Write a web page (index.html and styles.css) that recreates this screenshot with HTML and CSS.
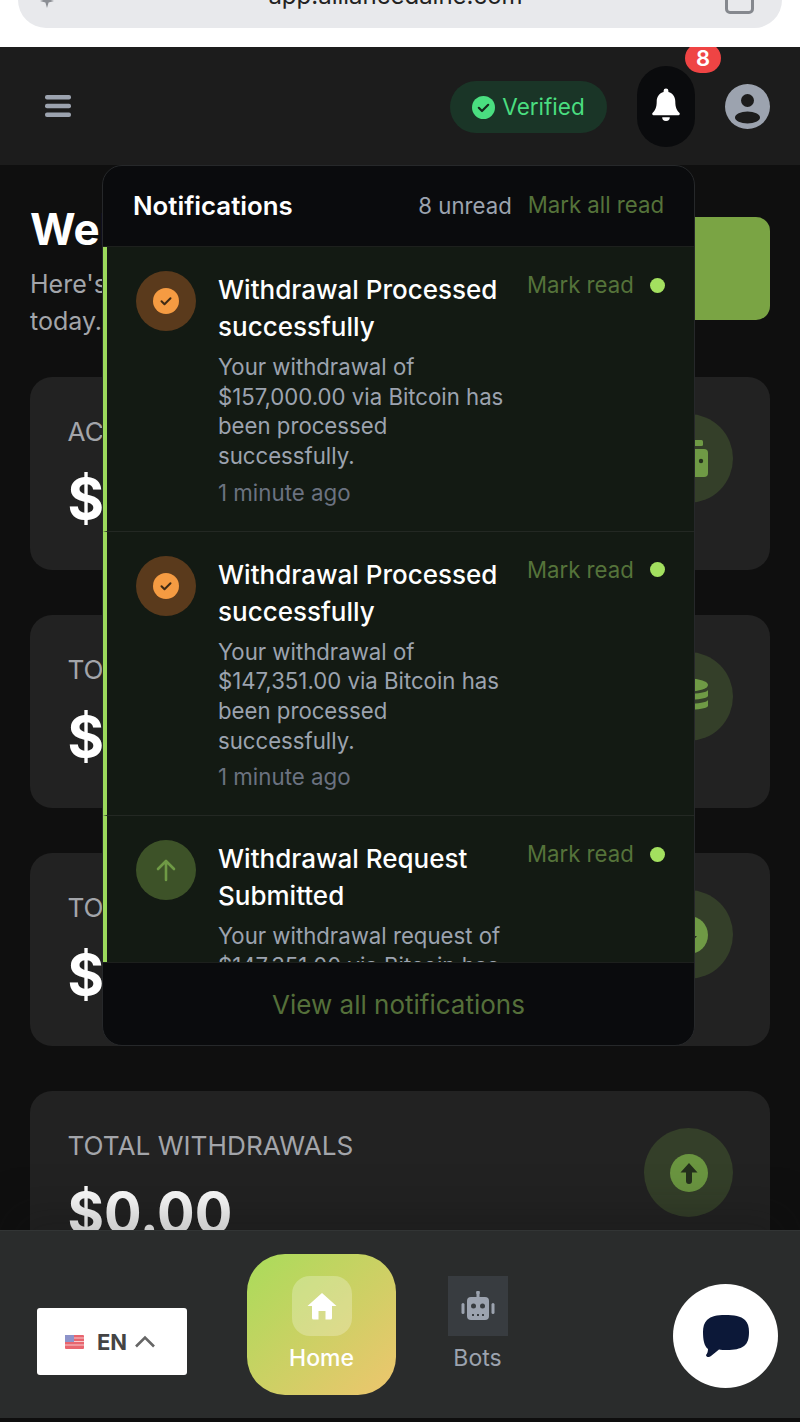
FILE: index.html
```html
<!DOCTYPE html>
<html lang="en">
<head>
<meta charset="utf-8">
<title>Dashboard</title>
<link rel="stylesheet" href="styles.css">
</head>
<body>
<div class="page">
  <div class="browser">
    <div class="urlbar">
      <svg class="spark" width="28" height="28" viewBox="0 0 28 28"><path d="M9 8l1.600 5.400L16 15l-5.400 1.600L9 22l-1.600-5.400L2 15l5.400-1.600zM20 1l1 5 1 1-2 6-1-5-1-1z" fill="#8b8e94"/></svg>
      <span class="url">app.alliancedaine.com</span>
      <span class="tabs"></span>
    </div>
  </div>

  <header class="topbar">
    <svg class="menu" width="26" height="22" viewBox="0 0 26 22"><rect y="0" width="26" height="4.500" rx="2" fill="#9ca3af"/><rect y="8.750" width="26" height="4.500" rx="2" fill="#9ca3af"/><rect y="17.500" width="26" height="4.500" rx="2" fill="#9ca3af"/></svg>
    <div class="top-actions">
      <div class="verified">
        <svg width="23" height="23" viewBox="0 0 23 23"><circle cx="11.500" cy="11.500" r="11.500" fill="#4ade80"/><path d="M6.800 11.800l3.200 3.200 6.200-6.200" fill="none" stroke="#14291c" stroke-width="2.200" stroke-linecap="round" stroke-linejoin="round"/></svg>
        <span class="verified-text">Verified</span>
      </div>
      <div class="bell">
        <svg width="34" height="38" viewBox="0 0 24 27"><path d="M12 1a1.700 1.700 0 0 0-1.700 1.700v.8C7.200 4.300 5.400 7 5.400 10.300c0 4.200-1.100 6.200-3 8.200-.5.600-.1 1.500.7 1.500h17.800c.8 0 1.200-.9.700-1.500-1.900-2-3-4-3-8.200 0-3.300-1.800-6-4.900-6.800v-.8A1.700 1.700 0 0 0 12 1z" fill="#fff"/><path d="M9.300 21.500a2.700 2.700 0 0 0 5.400 0z" fill="#fff"/></svg>
        <span class="badge">8</span>
      </div>
      <svg class="avatar" width="45" height="45" viewBox="0 0 45 45"><circle cx="22.500" cy="22.500" r="22.500" fill="#9ca3af"/><circle cx="22.500" cy="16.500" r="6.500" fill="#1c1c1c"/><ellipse cx="22.500" cy="33.500" rx="12.500" ry="6" fill="#1c1c1c"/></svg>
    </div>
  </header>

  <main class="content">
    <section class="hero">
      <div class="hero-text">
        <h1>Welcome back</h1>
        <p>Here's your account overview for today.</p>
      </div>
      <div class="hero-btn"></div>
    </section>

    <section class="card">
      <div>
        <div class="card-label">ACCOUNT BALANCE</div>
        <div class="card-value">$0.00</div>
      </div>
      <div class="card-icon">
        <svg width="38" height="38" viewBox="0 0 38 38"><rect x="5" y="0" width="28" height="6" rx="1.500" fill="#6f9a45"/><path d="M4 9h30a4 4 0 0 1 4 4v20a4 4 0 0 1-4 4H4a4 4 0 0 1-4-4V13a4 4 0 0 1 4-4z" fill="#6f9a45"/><circle cx="31" cy="21" r="2.200" fill="#24301c"/></svg>
      </div>
    </section>

    <section class="card">
      <div>
        <div class="card-label">TOTAL DEPOSITS</div>
        <div class="card-value">$0.00</div>
      </div>
      <div class="card-icon">
        <svg width="38" height="38" viewBox="0 0 38 38"><ellipse cx="19" cy="7" rx="19" ry="6.500" fill="#6f9a45"/><path d="M0 12c3 5 35 5 38 0v6c-3 5-35 5-38 0z" fill="#6f9a45"/><path d="M0 22c3 5 35 5 38 0v6c-3 5-35 5-38 0z" fill="#6f9a45"/><path d="M14 30h5v8h-5z" fill="#6f9a45"/></svg>
      </div>
    </section>

    <section class="card">
      <div>
        <div class="card-label">TOTAL PROFITS</div>
        <div class="card-value">$0.00</div>
      </div>
      <div class="card-icon">
        <svg width="38" height="38" viewBox="0 0 38 38"><circle cx="19" cy="19" r="19" fill="#6f9a45"/><path d="M19 29l8-9h-5v-9a3 3 0 0 0-6 0v9h-5z" fill="#24301c"/></svg>
      </div>
    </section>

    <section class="card">
      <div>
        <div class="card-label">TOTAL WITHDRAWALS</div>
        <div class="card-value">$0.00</div>
      </div>
      <div class="card-icon">
        <svg width="38" height="38" viewBox="0 0 38 38"><circle cx="19" cy="19" r="19" fill="#6a9540"/><path d="M19 9l-8.500 9.500H16V27a3 3 0 0 0 6 0v-8.500h5.500z" fill="#24301c"/></svg>
      </div>
    </section>
  </main>

  <aside class="panel">
    <div class="panel-head">
      <span class="panel-title">Notifications</span>
      <div class="panel-meta">
        <span class="unread">8 unread</span>
        <span class="mark">Mark all read</span>
      </div>
    </div>
    <div class="panel-list">
      <article class="note">
        <div class="note-icon note-icon-orange">
          <svg width="26" height="26" viewBox="0 0 26 26"><circle cx="13" cy="13" r="13" fill="#f59b42"/><path d="M8.500 13.300l3 3 6-6" fill="none" stroke="#3f2a14" stroke-width="2" stroke-linecap="round" stroke-linejoin="round"/></svg>
        </div>
        <div class="note-body">
          <h2>Withdrawal Processed successfully</h2>
          <p>Your withdrawal of $157,000.00 via Bitcoin has been processed successfully.</p>
          <time>1 minute ago</time>
        </div>
        <div class="note-side"><span class="mark">Mark read</span><span class="dot"></span></div>
      </article>
      <article class="note">
        <div class="note-icon note-icon-orange">
          <svg width="26" height="26" viewBox="0 0 26 26"><circle cx="13" cy="13" r="13" fill="#f59b42"/><path d="M8.500 13.300l3 3 6-6" fill="none" stroke="#3f2a14" stroke-width="2" stroke-linecap="round" stroke-linejoin="round"/></svg>
        </div>
        <div class="note-body">
          <h2>Withdrawal Processed successfully</h2>
          <p>Your withdrawal of $147,351.00 via Bitcoin has been processed successfully.</p>
          <time>1 minute ago</time>
        </div>
        <div class="note-side"><span class="mark">Mark read</span><span class="dot"></span></div>
      </article>
      <article class="note">
        <div class="note-icon note-icon-green">
          <svg width="24" height="26" viewBox="0 0 24 26"><path d="M12 23V4M4 12l8-8 8 8" fill="none" stroke="#6f9a45" stroke-width="2.600" stroke-linecap="round" stroke-linejoin="round"/></svg>
        </div>
        <div class="note-body">
          <h2>Withdrawal Request Submitted</h2>
          <p>Your withdrawal request of $147,351.00 via Bitcoin has been submitted.</p>
          <time>1 minute ago</time>
        </div>
        <div class="note-side"><span class="mark">Mark read</span><span class="dot"></span></div>
      </article>
    </div>
    <div class="panel-foot">View all notifications</div>
  </aside>

  <nav class="bottombar">
    <div class="nav-item nav-home">
      <span class="nav-icon">
        <svg width="30" height="28" viewBox="0 0 30 28"><path d="M15 1L0.500 14h4.500v12a1.500 1.500 0 0 0 1.500 1.500h5V19h7v8.500h5a1.500 1.500 0 0 0 1.500-1.500V14h4.500z" fill="#fff"/></svg>
      </span>
      <span class="nav-label">Home</span>
    </div>
    <div class="nav-item nav-bots">
      <span class="nav-icon">
        <svg width="34" height="30" viewBox="0 0 34 30"><rect x="6" y="6" width="22" height="23" rx="4" fill="#9ca3af"/><rect x="15.500" y="0" width="3" height="7" fill="#9ca3af"/><circle cx="17" cy="1.800" r="1.800" fill="#9ca3af"/><rect x="0.500" y="12" width="3" height="11" rx="1.500" fill="#9ca3af"/><rect x="30.500" y="12" width="3" height="11" rx="1.500" fill="#9ca3af"/><circle cx="12.500" cy="15" r="2.500" fill="#383c40"/><circle cx="21.500" cy="15" r="2.500" fill="#383c40"/><path d="M11 23h2v2h-2zM16 23h2v2h-2zM21 23h2v2h-2z" fill="#383c40"/></svg>
      </span>
      <span class="nav-label">Bots</span>
    </div>
    <div class="lang">
      <svg class="flag" width="19" height="14" viewBox="0 0 19 14"><rect width="19" height="14" rx="1" fill="#e8656e"/><path d="M0 3h19M0 6.500h19M0 10h19" stroke="#f6c9cc" stroke-width="1.200"/><rect width="9" height="7" fill="#8d93c9"/></svg>
      <span class="lang-code">EN</span>
      <svg width="22" height="13" viewBox="0 0 22 13"><path d="M2 11.500L11 2.500l9 9" fill="none" stroke="#666" stroke-width="2.600"/></svg>
    </div>
    <div class="chat">
      <svg width="46" height="44" viewBox="0 0 46 44"><path d="M22 1c9 0 16 1 20 5 3 3 4 7 4 12 0 6-1 11-5 14-4 3-10 4-17 4-3 0-6 0-8-.5L8 42c-2 2-5 1-5-1 1-1 2-3 2-6C1 32 0 25 0 18c0-5 1-9 4-12 4-4 10-5 18-5z" fill="#0c1838"/></svg>
    </div>
  </nav>
</div>
</body>
</html>
```
FILE: styles.css
```css
* { box-sizing: border-box; margin: 0; padding: 0; }
html, body { background: #0f0f0f; }
body { font-family: Inter, "Liberation Sans", sans-serif; }

.page {
  position: relative;
  width: 800px;
  height: 1422px;
  overflow: hidden;
  background: #0f0f0f;
}

/* browser chrome */
.browser { height: 47px; background: #fff; padding: 0 18px; }
.urlbar {
  height: 28px;
  background: #e8e9ec;
  border-radius: 0 0 28px 28px;
  padding: 0 28px 0 20px;
  display: flex;
  align-items: flex-end;
  justify-content: space-between;
  overflow: hidden;
}
.spark { margin-bottom: 14px; }
.url { font-size: 24px; line-height: 28px; margin-bottom: 18px; color: #222; }
.tabs {
  width: 29px;
  height: 30px;
  margin-bottom: 14px;
  border: 3px solid #85888e;
  border-radius: 5px;
}

/* top bar */
.topbar {
  height: 118px;
  background: #1c1c1c;
  padding: 0 30px 0 45px;
  display: flex;
  align-items: center;
  justify-content: space-between;
  overflow: hidden;
}
.top-actions { display: flex; align-items: center; gap: 30px; }
.verified {
  height: 52px;
  width: 157px;
  margin-top: 2px;
  border-radius: 26px;
  background: #1a3527;
  color: #4ade80;
  font-size: 22.500px;
  display: flex;
  align-items: center;
  justify-content: center;
  gap: 7px;
}
.verified-text { margin-bottom: 2px; }
.bell {
  position: relative;
  width: 58px;
  height: 81px;
  border-radius: 29px;
  background: #0a0b0d;
  display: flex;
  align-items: center;
  justify-content: center;
}
.badge {
  position: absolute;
  top: -23px;
  left: 48px;
  width: 36px;
  height: 30px;
  border-radius: 15px;
  background: #ef4444;
  color: #fff;
  font-size: 22px;
  font-weight: 600;
  display: flex;
  align-items: center;
  justify-content: center;
}

/* main */
.content { padding: 40px 30px 0; display: flex; flex-direction: column; gap: 45px; }
.hero {
  display: flex;
  align-items: flex-start;
  justify-content: space-between;
  height: 135px;
  margin-bottom: -8px;
}
.hero-text { width: 420px; }
.hero-text h1 { font-size: 44px; line-height: 48px; font-weight: 700; color: #fff; margin-bottom: 13px; }
.hero-text p { font-size: 25px; line-height: 37px; color: #a3a5aa; }
.hero-btn { width: 200px; height: 103px; margin-top: 12px; border-radius: 14px; background: #7aa444; }

.card {
  height: 193px;
  flex: none;
  border-radius: 22px;
  background: #222;
  padding: 38px 37px 0 37.500px;
  display: flex;
  justify-content: space-between;
  align-items: flex-start;
}
.card-label { font-size: 26.200px; line-height: 34px; color: #a3a5aa; }
.card-value { font-size: 55.800px; line-height: 64px; font-weight: 700; color: #fff; margin-top: 18px; }
.card-icon {
  width: 89px;
  height: 89px;
  margin-top: -1px;
  border-radius: 50%;
  background: #343f29;
  display: flex;
  align-items: center;
  justify-content: center;
}

/* notifications dropdown */
.panel {
  position: absolute;
  left: 102px;
  top: 165px;
  width: 593px;
  height: 881px;
  border: 1px solid #26282a;
  border-radius: 20px;
  background: #0a0b0d;
  display: flex;
  flex-direction: column;
  overflow: hidden;
}
.panel-head {
  height: 81px;
  flex: none;
  padding: 0 30px 2px;
  display: flex;
  align-items: center;
  justify-content: space-between;
  border-bottom: 1px solid #1d201d;
}
.panel-title { font-size: 25.800px; font-weight: 600; color: #fff; }
.panel-meta { display: flex; gap: 16px; font-size: 22.200px; align-items: center; }
.unread { color: #9ca3af; }
.mark { color: #55733a; font-size: 22.200px; line-height: 28px; }
.panel-list { flex: 1; overflow: hidden; }
.note {
  height: 284.500px;
  background: #131a13;
  border-left: 4px solid #9bd95b;
  border-bottom: 1px solid #232823;
  padding: 24px 30px 0 29px;
  display: flex;
}
.note-icon {
  width: 60px;
  height: 60px;
  flex: none;
  border-radius: 50%;
  display: flex;
  align-items: center;
  justify-content: center;
  margin-right: 22px;
}
.note-icon-orange { background: #5a3a1c; }
.note-icon-green { background: #3d5228; }
.note-body { width: 292px; flex: none; margin-right: 17px; }
.note-body h2 { font-size: 26px; line-height: 37px; font-weight: 500; color: #fff; margin-bottom: 7px; }
.note-body p { font-size: 22.200px; line-height: 29.700px; color: #9ca3af; }
.note-body time { display: block; font-size: 22.300px; line-height: 28px; color: #6b7280; margin-top: 8px; }
.note-side { display: flex; align-items: center; gap: 16px; height: 28px; flex: none; }
.dot { width: 15px; height: 15px; border-radius: 50%; background: #a3e05f; }
.panel-foot {
  height: 83px;
  flex: none;
  display: flex;
  align-items: center;
  justify-content: center;
  font-size: 26px;
  color: #55703a;
  border-top: 1px solid #1d201d;
}

/* bottom bar */
.bottombar {
  position: absolute;
  left: 0;
  right: 0;
  top: 1230px;
  height: 188px;
  background: #2a2c2c;
  border-top: 1px solid #323535;
  padding: 23px 0 0 247px;
  display: flex;
  gap: 7px;
  box-shadow: 0 -30px 40px -10px rgba(15, 15, 15, .25);
}
.nav-item {
  width: 149px;
  height: 141px;
  border-radius: 38px;
  display: flex;
  flex-direction: column;
  align-items: center;
  padding-top: 22px;
}
.nav-home { background: linear-gradient(135deg, #a9dc5a, #eec56e); color: #fff; font-weight: 500; }
.nav-bots { color: #9ca3af; }
.nav-icon {
  width: 60px;
  height: 60px;
  display: flex;
  align-items: center;
  justify-content: center;
}
.nav-home .nav-icon { background: rgba(255, 255, 255, .25); border-radius: 18px; }
.nav-bots .nav-icon { background: #383c40; }
.nav-label { font-size: 23px; line-height: 28px; margin-top: 8px; }
.lang {
  position: absolute;
  left: 37px;
  top: 77px;
  width: 150px;
  height: 67px;
  border-radius: 3px;
  background: #fff;
  color: #444;
  font-size: 22px;
  font-weight: 700;
  display: flex;
  align-items: center;
  padding-left: 28px;
  gap: 7px;
}
.lang-code { margin-left: 6px; }
.chat {
  position: absolute;
  left: 673px;
  top: 53px;
  width: 105px;
  height: 104px;
  border-radius: 50%;
  background: #fff;
  display: flex;
  align-items: center;
  justify-content: center;
}
```
